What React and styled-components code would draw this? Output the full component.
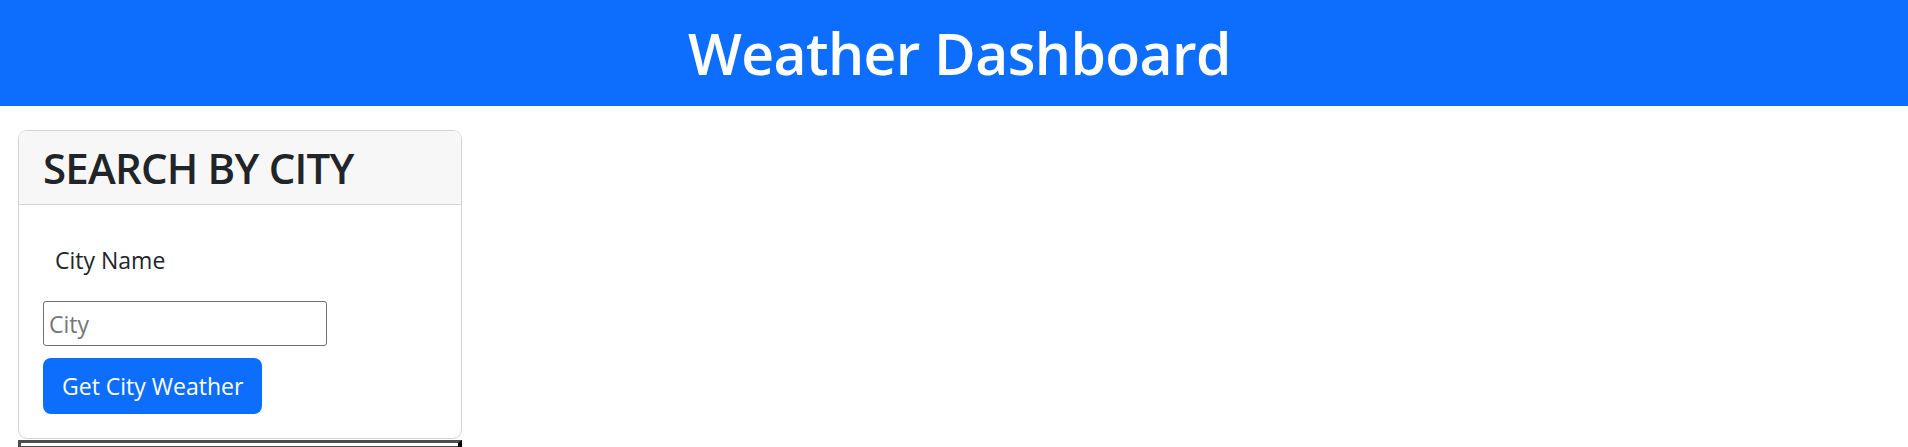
import React from "react";
import styled, { createGlobalStyle } from "styled-components";

const GlobalStyle = createGlobalStyle`
  body {
    margin: 0;
    font-family: "Open Sans", "Noto Sans", sans-serif;
    color: #212529;
    background: #fff;
  }
`;

const Header = styled.header`
  height: 106px;
  padding-left: 11px;
  background-color: #0d6efd;
  display: flex;
  align-items: center;
  justify-content: center;
  h1 {
    margin: 0;
    color: #fff;
    font-size: 57px;
    font-weight: 600;
    letter-spacing: -0.6px;
    line-height: 1.2;
  }
`;

const Main = styled.main`
  padding: 24px 18px 0;
  width: 444px;
`;

const Card = styled.section`
  border: 1px solid #d4d4d4;
  border-radius: 9px;
  overflow: hidden;
`;

const CardHeader = styled.div`
  background-color: #f7f7f7;
  border-bottom: 1px solid #d4d4d4;
  padding: 11px 22px 10px 24px;
  h2 {
    margin: 0;
    font-size: 42px;
    font-weight: 600;
    letter-spacing: -0.8px;
    line-height: 52px;
  }
`;

const CardBody = styled.form`
  padding: 37px 24px 24px;
  display: flex;
  flex-direction: column;
  align-items: flex-start;
`;

const Label = styled.label`
  font-size: 23px;
  line-height: 36px;
  padding-left: 12px;
  margin-bottom: 23px;
`;

const CityInput = styled.input`
  box-sizing: border-box;
  width: 284px;
  height: 45px;
  padding: 0 5px;
  border: 1px solid #6f6f6f;
  border-radius: 3px;
  font-family: inherit;
  font-size: 23px;
  color: #212529;
  &::placeholder {
    color: #757575;
  }
`;

const SubmitButton = styled.button`
  margin-top: 12px;
  height: 56px;
  padding: 0 19px;
  border: none;
  border-radius: 8px;
  background-color: #0d6efd;
  color: #fff;
  font-family: inherit;
  font-size: 23px;
  cursor: pointer;
`;

const Results = styled.section`
  margin-top: 1px;
  height: 80px;
  border-top: 3px solid #4d4d4d;
  border-left: 3px solid #4d4d4d;
  border-right: 4px solid #000;
  border-bottom: 3px solid #000;
  div {
    margin-top: 3px;
    border-top: 1px solid #4d4d4d;
  }
`;

export default function App() {
  return (
    <>
      <GlobalStyle />
      <Header>
        <h1>Weather Dashboard</h1>
      </Header>
      <Main>
        <Card>
          <CardHeader>
            <h2>SEARCH BY CITY</h2>
          </CardHeader>
          <CardBody onSubmit={(e) => e.preventDefault()}>
            <Label htmlFor="city">City Name</Label>
            <CityInput id="city" type="text" placeholder="City" />
            <SubmitButton type="submit">Get City Weather</SubmitButton>
          </CardBody>
        </Card>
        <Results>
          <div />
        </Results>
      </Main>
    </>
  );
}
